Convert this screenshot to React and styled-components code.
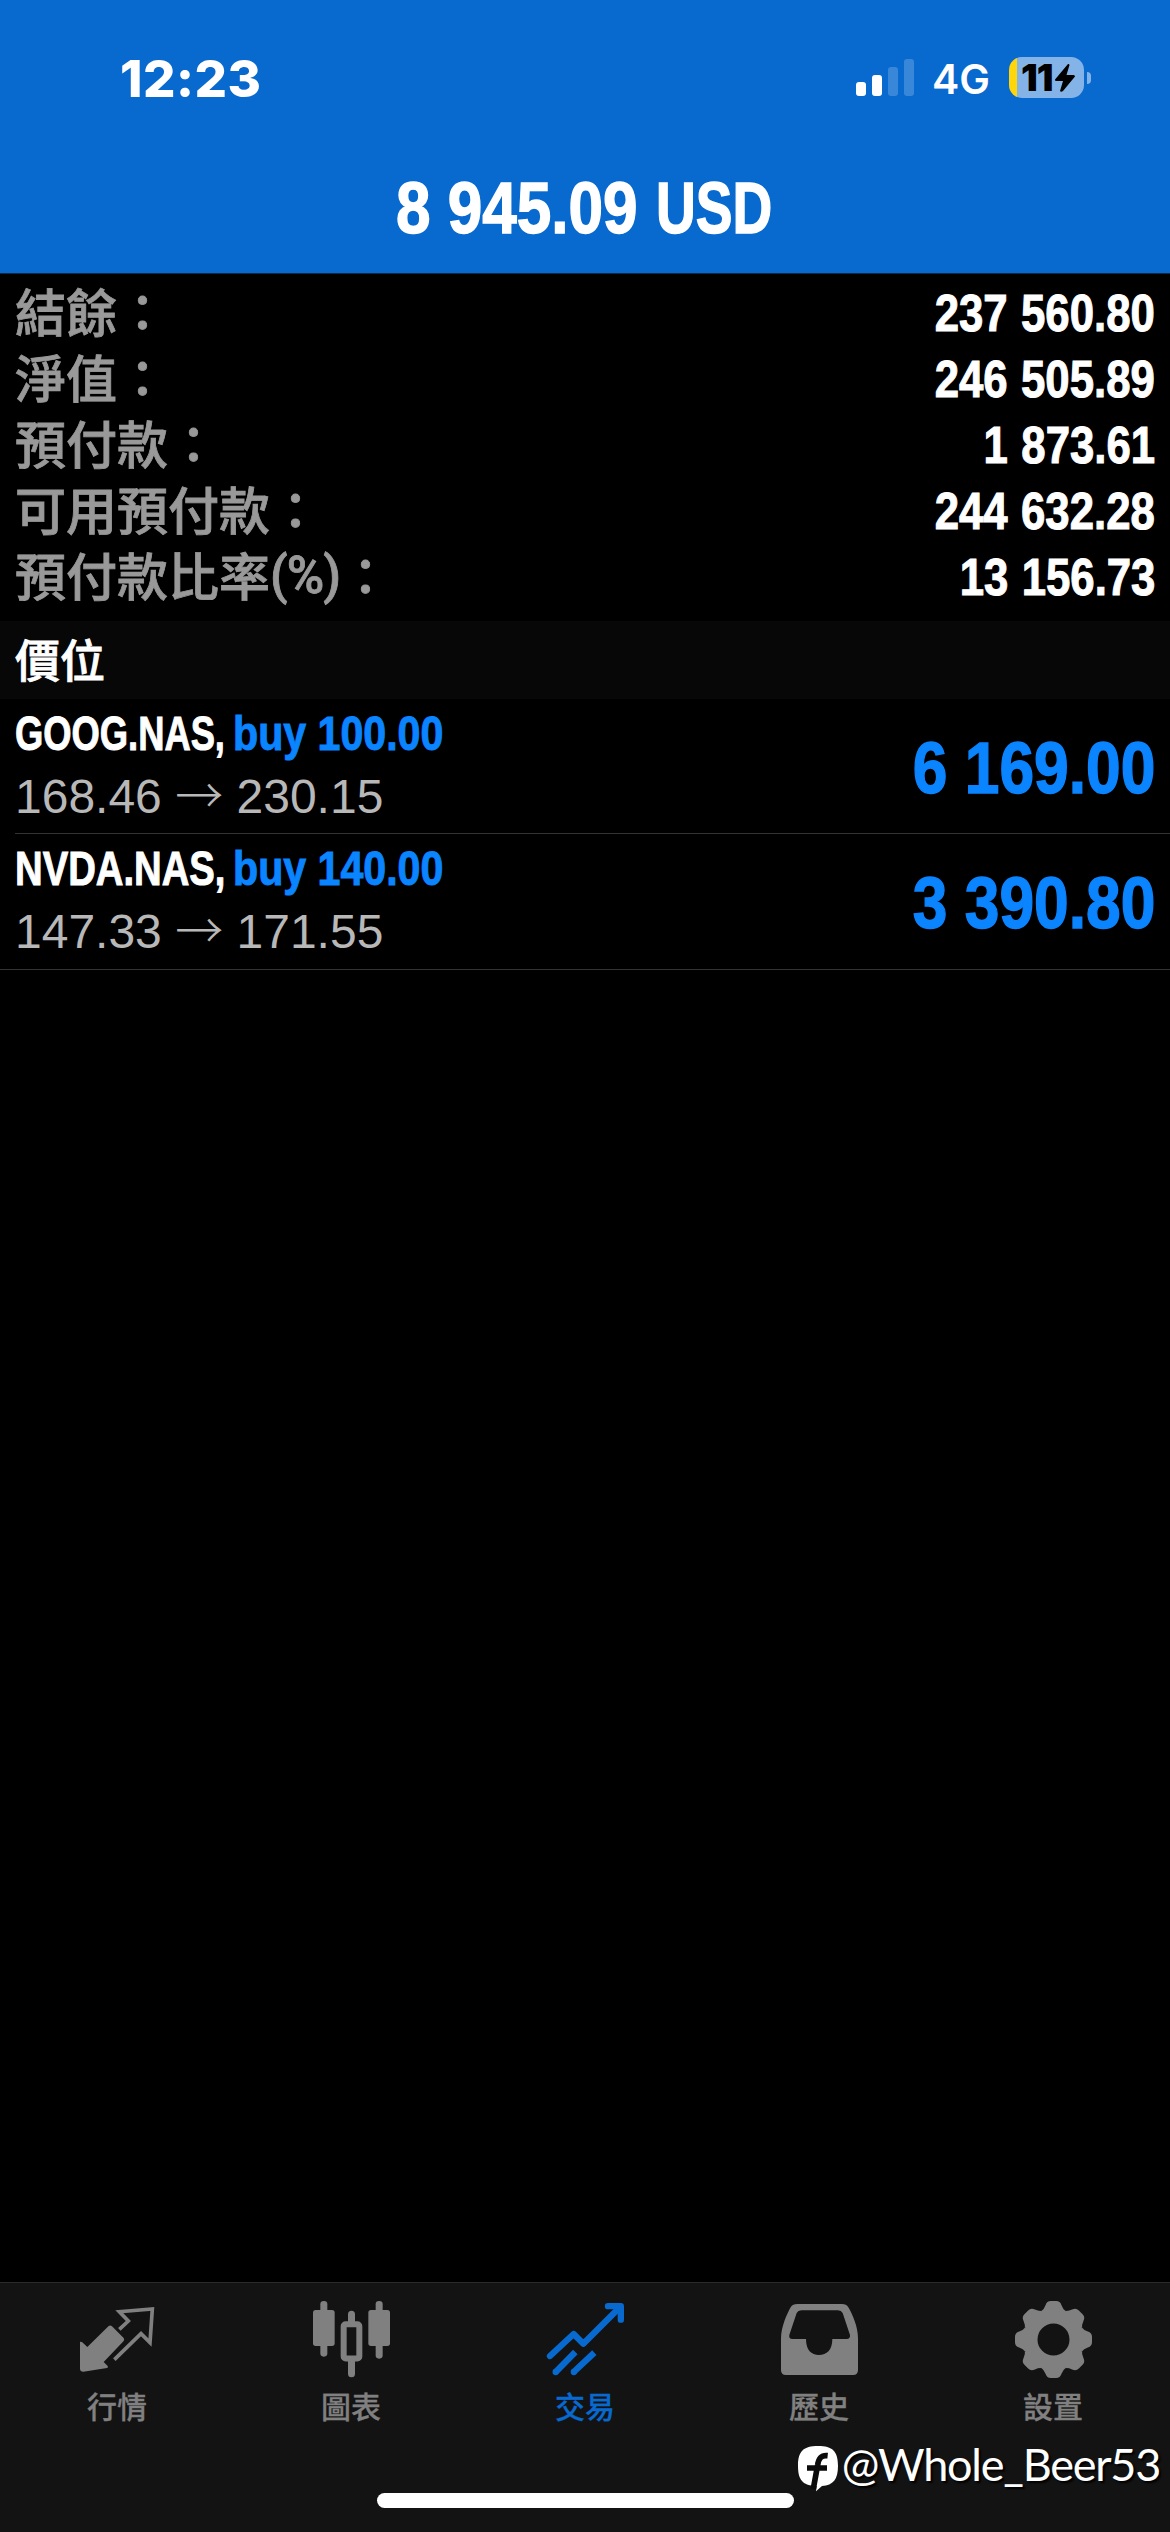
import React from "react";
import styled, { createGlobalStyle } from "styled-components";

const GlobalStyle = createGlobalStyle`
  :root {
    --blue: #0869cf;
    --accent: #0a84ff;
    --grey: #808080;
    --sans: "Liberation Sans", "Noto Sans CJK TC", sans-serif;
    --cjk: "Noto Sans CJK TC", sans-serif;
    --system: Inter, sans-serif;
  }

  body {
    margin: 0;
    background: #000;
  }
`;

const Screen = styled.div`
  width: 1170px;
  height: 2532px;
  display: flex;
  flex-direction: column;
  position: relative;
  overflow: hidden;
  background: #000;
  color: #fff;
  font-family: var(--sans);
`;

const Header = styled.header`
  box-sizing: border-box;
  height: 274px;
  background: var(--blue);
  border-bottom: 1px solid #0b2a4c;
`;

const StatusBar = styled.div`
  box-sizing: border-box;
  height: 141px;
  padding: 57px 79px 0 120px;
  display: flex;
  justify-content: space-between;
  align-items: flex-start;
  font-family: var(--system);
`;

const Clock = styled.div`
  font-size: 51px;
  font-weight: 800;
  letter-spacing: 0.5px;
  line-height: 43px;
`;

const StatusIcons = styled.div`
  display: flex;
  align-items: flex-start;
`;

const Signal = styled.div`
  display: flex;
  align-items: flex-end;
  gap: 6px;
  height: 39px;
`;

const SignalBar = styled.span`
  width: 10px;
  height: ${(props) => props.$height}px;
  border-radius: 3px;
  background: ${(props) => (props.$on ? "#fff" : "rgba(255, 255, 255, 0.2)")};
`;

const Network = styled.span`
  width: 58px;
  margin: 0 19px 0 18px;
  font-size: 41px;
  font-weight: 600;
  line-height: 44px;
`;

const Battery = styled.div`
  box-sizing: border-box;
  width: 75px;
  height: 41px;
  padding-left: 12px;
  display: flex;
  align-items: center;
  border-radius: 13px;
  background: linear-gradient(
    to right,
    #ffd60a 8px,
    rgba(255, 255, 255, 0.5) 8px
  );
  color: #000;
  font-size: 37px;
  font-weight: 900;
`;

const BatteryLevel = styled.span`
  width: 34px;
  letter-spacing: -1px;
`;

const BatteryCap = styled.span`
  width: 4px;
  height: 12px;
  margin: 15px 0 0 3px;
  border-radius: 0 6px 6px 0;
  background: rgba(255, 255, 255, 0.5);
`;

const Narrow = styled.span`
  display: inline-block;
  width: ${(props) => (props.$width ? `${props.$width}px` : "auto")};
  white-space: pre;
  font-weight: 700;
  -webkit-text-stroke: 0.02em currentColor;
  transform: scaleX(${(props) => props.$scale || 0.857});
  transform-origin: ${(props) => props.$origin || "left"} center;
`;

const Profit = styled.h1`
  margin: 0 0 0 396px;
  font-size: 72px;
  line-height: 134px;
  white-space: nowrap;
`;

const Summary = styled.section`
  box-sizing: border-box;
  height: 347px;
  padding: 7px 15px 0;
`;

const SummaryRow = styled.div`
  height: 66px;
  display: flex;
  justify-content: space-between;
  font-size: 51px;
  line-height: 66px;
`;

const Label = styled.span`
  color: #999;
  font-weight: 500;
  line-height: 67px;
  -webkit-text-stroke: 0.8px currentColor;
`;

const Percent = styled.span`
  font-family: Roboto, sans-serif;
  letter-spacing: -1px;
  line-height: 1;
  vertical-align: 3px;
`;

const Value = styled(Narrow)`
  word-spacing: 1.5px;
`;

const SectionTitle = styled.h2`
  height: 78px;
  margin: 0;
  padding-left: 15px;
  background: #070707;
  font-size: 45px;
  font-weight: 500;
  line-height: 83px;
  -webkit-text-stroke: 0.8px currentColor;
`;

const Position = styled.div`
  box-sizing: border-box;
  height: ${(props) => (props.$last ? 136 : 135)}px;
  margin-left: ${(props) => (props.$last ? 0 : 15)}px;
  padding: 8px 15px 0 ${(props) => (props.$last ? 15 : 0)}px;
  display: flex;
  justify-content: space-between;
  border-bottom: 1px solid #333;
`;

const Deal = styled.div`
  font-size: 48px;
  line-height: 54px;
  white-space: nowrap;
`;

const Side = styled(Narrow)`
  color: var(--accent);
`;

const Prices = styled.div`
  line-height: 72px;
  color: #b8b8b8;
`;

const Arrow = styled.span`
  font-family: var(--cjk);
  font-weight: 300;
  line-height: 1;
`;

const Result = styled(Narrow)`
  font-size: 72px;
  line-height: 122px;
  color: var(--accent);
`;

const TabBar = styled.nav`
  box-sizing: border-box;
  height: 250px;
  margin-top: auto;
  padding-top: 17px;
  display: grid;
  grid-template-columns: repeat(5, 1fr);
  align-content: space-between;
  border-top: 1px solid #2b2b2b;
  background: #131313;
`;

const Tab = styled.div`
  display: flex;
  flex-direction: column;
  align-items: center;
  gap: 7px;
  color: ${(props) => (props.$active ? "var(--blue)" : "var(--grey)")};
  font-size: 30px;
  font-weight: 500;
  line-height: 46px;
  -webkit-text-stroke: 0.3px currentColor;
`;

const HomeIndicator = styled.div`
  grid-column: 1 / -1;
  justify-self: center;
  width: 417px;
  height: 15px;
  margin-bottom: 24px;
  border-radius: 8px;
  background: #fff;
`;

const Watermark = styled.div`
  position: absolute;
  right: 10px;
  bottom: 38px;
  display: flex;
  align-items: flex-start;
  font-family: Lato, sans-serif;
  font-size: 45px;
  letter-spacing: -1.25px;
  line-height: 40px;
  text-shadow: 2px 2px 2px #000;
`;

const Glyph = ({ viewBox, children }) => (
  <svg width="78" height="78" viewBox={viewBox} fill="currentColor">
    {children}
  </svg>
);

const QuotesIcon = () => (
  <Glyph viewBox="234 90 234 234">
    <path d="M240 216C244 214 248 218 250 220L262 231 326 168Q331 164 336 169L371 204Q374 209 371 213L311 276 323 288Q326 293 321 294L250 305Q240 305 240 296Z" />
    <path
      d="M358 178L385 153 358 125 457 117 450 218 423 191 343 269"
      fill="none"
      stroke="currentColor"
      strokeWidth="11"
    />
  </Glyph>
);

const ChartIcon = () => (
  <Glyph viewBox="936 90 234 234">
    <rect x="939" y="120" width="65" height="108" rx="8" />
    <rect x="961" y="93" width="21" height="167" rx="10" />
    <rect x="1105" y="120" width="65" height="108" rx="8" />
    <rect x="1127" y="93" width="21" height="173" rx="10" />
    <rect
      x="1031"
      y="162.5"
      width="47"
      height="103"
      rx="6"
      fill="none"
      stroke="currentColor"
      strokeWidth="18"
    />
    <path d="M1044 160V133a10.500 10.500 0 0 1 21 0V160ZM1044 268V311a10.500 10.500 0 0 0 21 0V268Z" />
  </Glyph>
);

const TradeIcon = () => (
  <Glyph viewBox="288 90 234 234">
    <g fill="none" stroke="currentColor" strokeWidth="19">
      <g strokeLinecap="round" strokeLinejoin="round">
        <path d="M300 258L371 192 400 221 508 113" />
        <path d="M474 108.500H512.500V149" />
      </g>
      <path d="M317 306L376 246M371 306L433 248" />
    </g>
    <circle cx="317" cy="306" r="9.500" />
    <circle cx="371.500" cy="306" r="9.500" />
  </Glyph>
);

const HistoryIcon = () => (
  <Glyph viewBox="60 90 234 234">
    <path
      fillRule="evenodd"
      d="M63 300V205C63 170 82 130 92 112Q98 102 112 102H246Q259 102 265 112C277 132 294 170 294 205V300Q294 315 279 315H78Q63 315 63 300ZM110 129Q114 121 124 121H234Q244 121 248 129L270 195Q271 207 260 207H217C217 240 200 255 177 255C154 255 138 240 138 207H97Q86 207 88 195Z"
    />
  </Glyph>
);

const SettingsIcon = () => (
  <Glyph viewBox="-118.500 -118.500 234 234">
    {[0, 45, 90, 135, 180, 225, 270, 315].map((angle) => (
      <path
        key={angle}
        transform={`rotate(${angle})`}
        d="M-35.600 -86Q-29 -90 -24 -103Q-20 -115.500 -8 -115.500H8Q20 -115.500 24 -103Q29 -90 35.600 -86L30 -70H-30Z"
      />
    ))}
    <circle r="69" fill="none" stroke="currentColor" strokeWidth="42" />
  </Glyph>
);

const Bolt = () => (
  <svg width="20" height="28" viewBox="0 0 20 28">
    <path d="M13 0L0 15.500Q0 17 1 17H8L5 27Q6 28.500 8 27L20 12.500Q20 11 18.500 11H11.500L14.500 1Q14 -.5 13 0Z" />
  </svg>
);

const BubbleLogo = () => (
  <svg width="46" height="50" viewBox="104 522 138 150">
    <path
      fill="#fff"
      d="M170 528C214 528 230 544 230 587C230 628 216 645 182 648L164 664 166 648C124 646 110 630 110 587C110 544 126 528 170 528Z"
    />
    <path
      d="M199 557C180 555 172 563 169 585L156 656M137 594H197"
      fill="none"
      stroke="#0b0b0b"
      strokeWidth="17"
    />
  </svg>
);

const summary = [
  { label: "結餘", value: "237 560.80" },
  { label: "淨值", value: "246 505.89" },
  { label: "預付款", value: "1 873.61" },
  { label: "可用預付款", value: "244 632.28" },
  { label: "預付款比率", percent: true, value: "13 156.73" },
];

const positions = [
  {
    symbol: "GOOG.NAS,",
    scale: 0.757,
    side: "buy 100.00",
    open: "168.46",
    current: "230.15",
    profit: "6 169.00",
  },
  {
    symbol: "NVDA.NAS,",
    scale: 0.797,
    side: "buy 140.00",
    open: "147.33",
    current: "171.55",
    profit: "3 390.80",
  },
];

const tabs = [
  { title: "行情", Icon: QuotesIcon },
  { title: "圖表", Icon: ChartIcon },
  { title: "交易", Icon: TradeIcon, active: true },
  { title: "歷史", Icon: HistoryIcon },
  { title: "設置", Icon: SettingsIcon },
];

const App = () => (
  <>
    <GlobalStyle />
    <Screen lang="zh-Hant">
      <Header>
        <StatusBar>
          <Clock>12:23</Clock>
          <StatusIcons>
            <Signal>
              <SignalBar $height={14} $on />
              <SignalBar $height={21} $on />
              <SignalBar $height={29} />
              <SignalBar $height={37} />
            </Signal>
            <Network>4G</Network>
            <Battery>
              <BatteryLevel>11</BatteryLevel>
              <Bolt />
            </Battery>
            <BatteryCap />
          </StatusIcons>
        </StatusBar>
        <Profit>
          <Narrow $scale={0.862} $width={260}>
            8 945.09
          </Narrow>
          <Narrow $scale={0.765}>USD</Narrow>
        </Profit>
      </Header>

      <Summary>
        {summary.map((row) => (
          <SummaryRow key={row.label}>
            <Label>
              {row.label}
              {row.percent ? <Percent>(%)</Percent> : null}：
            </Label>
            <Value $origin="right">{row.value}</Value>
          </SummaryRow>
        ))}
      </Summary>

      <SectionTitle>價位</SectionTitle>

      {positions.map((item, index) => (
        <Position key={item.symbol} $last={index === positions.length - 1}>
          <Deal>
            <Narrow $scale={item.scale} $width={218}>
              {item.symbol}
            </Narrow>
            <Side>{item.side}</Side>
            <Prices>
              {item.open} <Arrow>→</Arrow> {item.current}
            </Prices>
          </Deal>
          <Result $scale={0.865} $origin="right">
            {item.profit}
          </Result>
        </Position>
      ))}

      <TabBar>
        {tabs.map(({ title, Icon, active }) => (
          <Tab key={title} $active={active}>
            <Icon />
            {title}
          </Tab>
        ))}
        <HomeIndicator />
      </TabBar>

      <Watermark>
        <BubbleLogo />
        @Whole_Beer53
      </Watermark>
    </Screen>
  </>
);

export default App;
